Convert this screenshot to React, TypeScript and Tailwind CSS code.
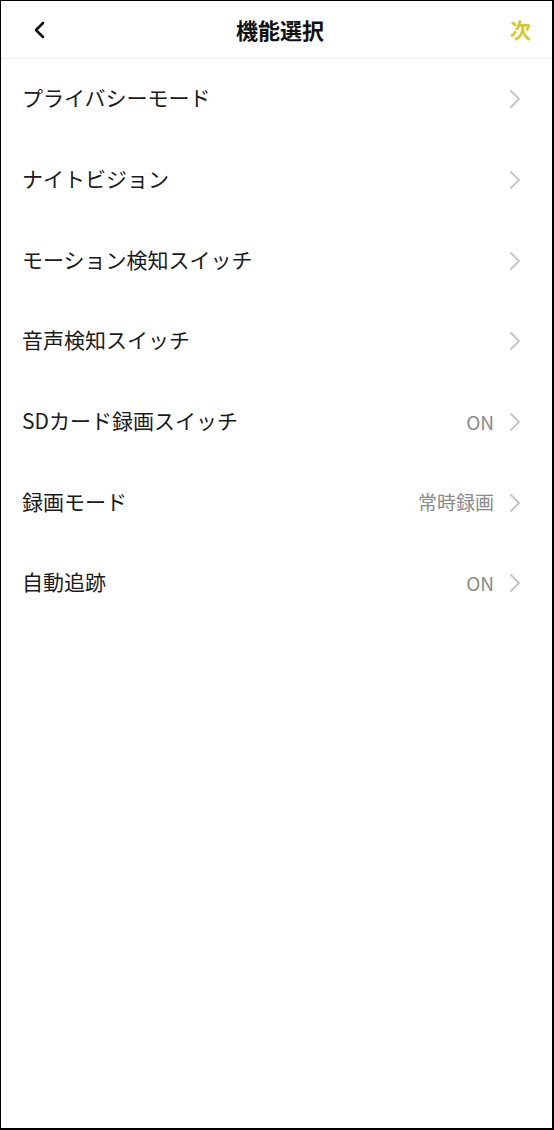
import React from "react";

const rows: { label: string; value?: string }[] = [
  { label: "プライバシーモード" },
  { label: "ナイトビジョン" },
  { label: "モーション検知スイッチ" },
  { label: "音声検知スイッチ" },
  { label: "SDカード録画スイッチ", value: "ON" },
  { label: "録画モード", value: "常時録画" },
  { label: "自動追跡", value: "ON" },
];

const font = { fontFamily: '"Noto Sans CJK JP", "Noto Sans", Roboto, sans-serif' };

function Chevron() {
  return (
    <svg width="12" height="20" viewBox="0 0 12 20" fill="none">
      <path d="M2 2 L10 10 L2 18" stroke="#c6c6c6" strokeWidth="2" strokeLinecap="round" strokeLinejoin="round" />
    </svg>
  );
}

export default function App() {
  return (
    <div className="w-[554px] h-[1130px] bg-white border-t border-l border-r-2 border-b-2 border-black flex flex-col" style={font}>
      <div className="h-[58px] flex items-center justify-between pl-[29px] pr-[21px] border-b border-[#efefef] shrink-0">
        <svg width="18" height="20" viewBox="0 0 18 20" fill="none">
          <path d="M13 3 L6 10 L13 17" stroke="#111" strokeWidth="2.6" strokeLinecap="round" strokeLinejoin="round" />
        </svg>
        <div className="text-[22px] font-bold text-[#111] leading-none pl-[2px] pb-[2px]">機能選択</div>
        <div className="text-[21px] font-bold text-[#d6c62c] leading-none">次</div>
      </div>
      <div className="flex flex-col">
        {rows.map((r) => (
          <div key={r.label} className="h-[80.7px] flex items-center justify-between pl-[21px] pr-[31px]">
            <span className="text-[21px] text-[#1a1a1a] leading-none pb-[3px]">{r.label}</span>
            <div className="flex items-center gap-[15px]">
              {r.value && <span className="text-[19px] text-[#8a8a8a] leading-none pb-[2px]">{r.value}</span>}
              <Chevron />
            </div>
          </div>
        ))}
      </div>
    </div>
  );
}
